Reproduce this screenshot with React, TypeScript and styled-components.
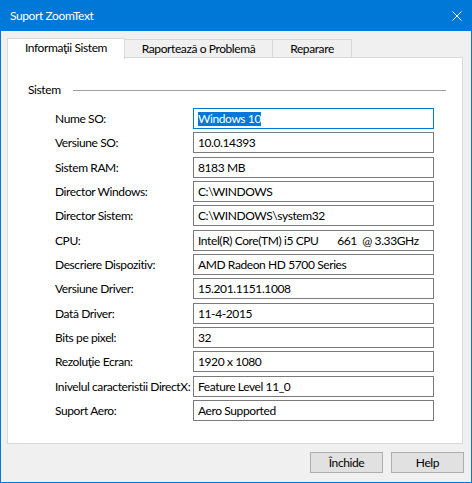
import React from "react";
import { styled, createGlobalStyle } from "styled-components";

const GlobalStyle = createGlobalStyle`
  html, body {
    margin: 0;
    padding: 0;
    background: #f0f0f0;
  }
  body {
    font-family: Lato, "Liberation Sans", sans-serif;
    font-size: 12px;
    letter-spacing: -0.4px;
    color: #000;
  }
`;

const rows: [string, string][] = [
    ["Nume SO:", "Windows 10"],
    ["Versiune SO:", "10.0.14393"],
    ["Sistem RAM:", "8183 MB"],
    ["Director Windows:", "C:\\WINDOWS"],
    ["Director Sistem:", "C:\\WINDOWS\\system32"],
    ["CPU:", "Intel(R) Core(TM) i5 CPU       661  @ 3.33GHz"],
    ["Descriere Dispozitiv:", "AMD Radeon HD 5700 Series"],
    ["Versiune Driver:", "15.201.1151.1008"],
    ["Dată Driver:", "11-4-2015"],
    ["Bits pe pixel:", "32"],
    ["Rezoluţie Ecran:", "1920 x 1080"],
    ["Inivelul caracteristii DirectX:", "Feature Level 11_0"],
    ["Suport Aero:", "Aero Supported"],
];

const tabs = [
    { label: "Informaţii Sistem", width: 118 },
    { label: "Raportează o Problemă", width: 149 },
    { label: "Reparare", width: 80 },
];

export default function App() {
    return (
        <>
            <GlobalStyle />
            <Window>
                <TitleBar>
                    <Title>Suport ZoomText</Title>
                    <CloseButton>
                        <svg width="10" height="10" viewBox="0 0 10 10">
                            <path d="M0.5 0.5 L9.5 9.5 M9.5 0.5 L0.5 9.5" stroke="#fff" strokeWidth="1" />
                        </svg>
                    </CloseButton>
                </TitleBar>
                <Body>
                    <TabStrip>
                        {tabs.map((t, i) => (
                            <Tab key={t.label} $active={i === 0} $width={t.width} $first={i === 0}>
                                {t.label}
                            </Tab>
                        ))}
                    </TabStrip>
                    <Panel>
                        <GroupHeader>
                            <GroupLabel>Sistem</GroupLabel>
                            <GroupLine />
                        </GroupHeader>
                        <Fields>
                            {rows.map(([label, value], i) => (
                                <React.Fragment key={label}>
                                    <FieldLabel>{label}</FieldLabel>
                                    <FieldBox $focused={i === 0}>
                                        {i === 0 ? <Selected>{value}</Selected> : value}
                                    </FieldBox>
                                </React.Fragment>
                            ))}
                        </Fields>
                    </Panel>
                    <Footer>
                        <Button>Închide</Button>
                        <Button>Help</Button>
                    </Footer>
                </Body>
            </Window>
        </>
    );
}

const Window = styled.div`
    width: 472px;
    height: 483px;
    box-sizing: border-box;
    border: 1px solid #0078d7;
    border-top: none;
    background: #f0f0f0;
    display: flex;
    flex-direction: column;
`;

const TitleBar = styled.div`
    height: 31px;
    margin: 0 -1px;
    background: #0078d7;
    display: flex;
    align-items: center;
    justify-content: space-between;
    padding: 0 10px 0 10px;
    flex-shrink: 0;
`;

const Title = styled.span`
    color: #fff;
    font-size: 12px;
    margin-top: -1px;
`;

const CloseButton = styled.span`
    display: flex;
    align-items: center;
`;

const Body = styled.div`
    flex: 1;
    display: flex;
    flex-direction: column;
    padding: 7px 8px 0 6px;
`;

const TabStrip = styled.div`
    display: flex;
    align-items: flex-end;
    height: 20px;
    position: relative;
    z-index: 1;
    margin-bottom: -1px;
`;

const Tab = styled.div<{ $active: boolean; $width: number; $first: boolean }>`
    box-sizing: border-box;
    width: ${(p) => p.$width}px;
    height: ${(p) => (p.$active ? 21 : 19)}px;
    margin-left: ${(p) => (p.$first ? 0 : -1)}px;
    margin-bottom: ${(p) => (p.$active ? -1 : 0)}px;
    background: ${(p) => (p.$active ? "#fff" : "#f0f0f0")};
    border: 1px solid #d9d9d9;
    border-bottom: ${(p) => (p.$active ? "none" : "1px solid #d9d9d9")};
    display: flex;
    justify-content: center;
    align-items: ${(p) => (p.$active ? "flex-start" : "center")};
    padding-top: ${(p) => (p.$active ? 1 : 0)}px;
    line-height: 16px;
    white-space: nowrap;
`;

const Panel = styled.div`
    box-sizing: border-box;
    width: 456px;
    height: 387px;
    background: #fff;
    border: 1px solid #d9d9d9;
    padding: 25px 16px 0 20px;
`;

const GroupHeader = styled.div`
    display: flex;
    align-items: center;
    height: 14px;
`;

const GroupLabel = styled.span`
    line-height: 14px;
`;

const GroupLine = styled.div`
    flex: 1;
    height: 1px;
    background: #a0a0a0;
    margin-left: 12px;
`;

const Fields = styled.div`
    display: grid;
    grid-template-columns: 138px 241px;
    grid-template-rows: repeat(13, 21px);
    row-gap: 3.33px;
    margin: 11px 0 0 27px;
`;

const FieldLabel = styled.div`
    display: flex;
    align-items: center;
    white-space: nowrap;
`;

const FieldBox = styled.div<{ $focused: boolean }>`
    box-sizing: border-box;
    border: 1px solid ${(p) => (p.$focused ? "#0078d7" : "#7a7a7a")};
    display: flex;
    align-items: center;
    padding: 0 4px;
    white-space: pre;
    overflow: hidden;
`;

const Selected = styled.span`
    background: #0078d7;
    color: #fff;
    line-height: 14px;
`;

const Footer = styled.div`
    display: flex;
    justify-content: flex-end;
    gap: 9px;
    margin-top: 8px;
`;

const Button = styled.div`
    box-sizing: border-box;
    width: 73px;
    height: 21px;
    background: #e1e1e1;
    border: 1px solid #adadad;
    display: flex;
    align-items: center;
    justify-content: center;
    margin-right: -1px;
`;
